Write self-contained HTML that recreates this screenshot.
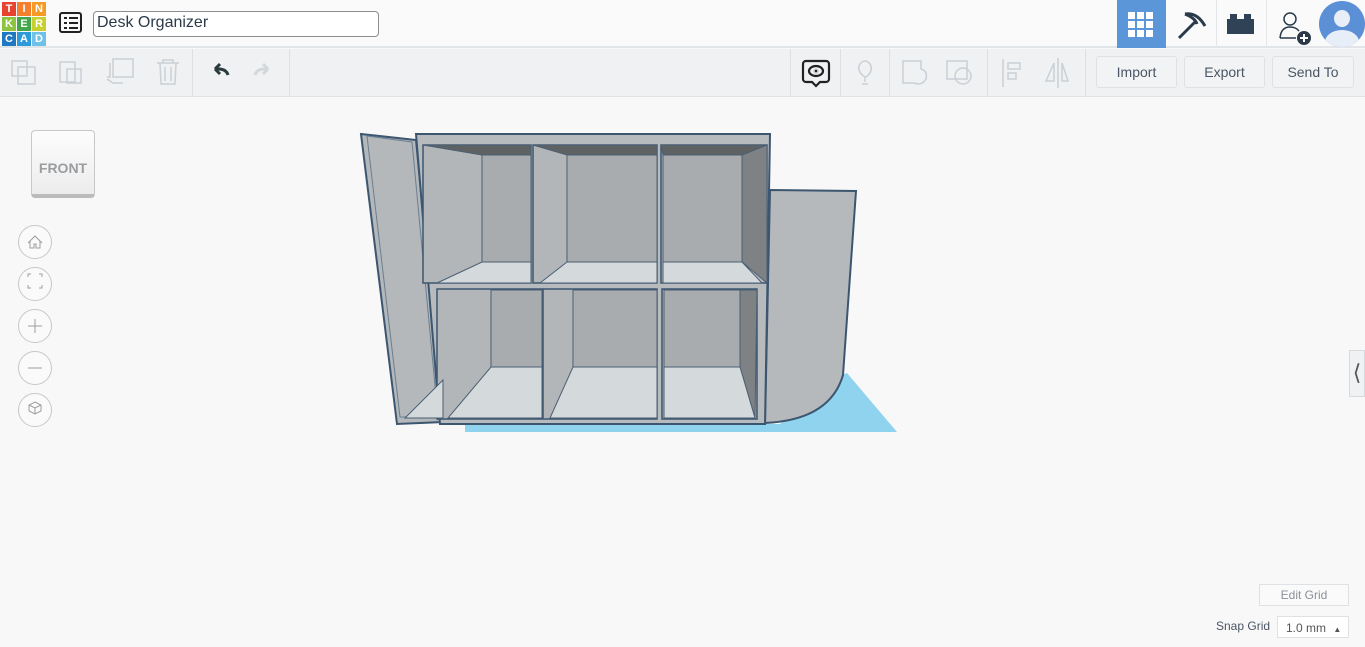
<!DOCTYPE html>
<html><head><meta charset="utf-8"><style>
*{margin:0;padding:0;box-sizing:border-box}
body{width:1365px;height:647px;overflow:hidden;background:#f8f8f8;font-family:"Liberation Sans",sans-serif;position:relative}
.hdr{position:absolute;left:0;top:0;width:1365px;height:48px;background:#fafafa;border-bottom:2px solid #e2e5e8}
.tb{position:absolute;left:0;top:49px;width:1365px;height:48px;background:#f0f1f2;border-bottom:1px solid #e0e3e6}
.logo{position:absolute;left:2px;top:2px;display:grid;grid-template-columns:repeat(3,14px);gap:1px}
.logo div{width:14px;height:14px;color:#fff;font-size:11px;font-weight:bold;text-align:center;line-height:14px}
.title{position:absolute;left:93px;top:11px;width:286px;height:26px;border:1px solid #8a8e93;border-radius:4px;background:#fff;font-size:16px;color:#2b3a4a;padding:2px 3px}
.btn{position:absolute;top:56px;height:32px;border:1px solid #dfe2e5;border-radius:3px;background:#f2f3f4;font-size:14px;color:#4a5665;text-align:center;line-height:30px}
.sep{position:absolute;top:49px;width:1px;height:47px;background:#dde0e3}
.circ{position:absolute;left:18px;width:34px;height:34px;border:1px solid #c5c8cb;border-radius:50%;background:#fafafa}
</style></head><body>
<div class="hdr"></div>
<div class="logo">
<div style="background:#e8432e">T</div><div style="background:#f57f2c">I</div><div style="background:#f59a24">N</div>
<div style="background:#8cc43f">K</div><div style="background:#43a647">E</div><div style="background:#c8d02f">R</div>
<div style="background:#1e78c2">C</div><div style="background:#2d9ad9">A</div><div style="background:#6ec1e8">D</div>
</div>
<svg style="position:absolute;left:59px;top:12px" width="24" height="22"><rect x="1" y="1" width="21" height="19" rx="2" fill="none" stroke="#222" stroke-width="2"/><g fill="#222"><rect x="5" y="5" width="3" height="2"/><rect x="10" y="5" width="9" height="2"/><rect x="5" y="10" width="3" height="2"/><rect x="10" y="10" width="9" height="2"/><rect x="5" y="15" width="3" height="2"/><rect x="10" y="15" width="9" height="2"/></g></svg>
<div class="title">Desk Organizer</div>
<div style="position:absolute;left:1117px;top:0;width:49px;height:48px;background:#5b96d8"></div>
<svg style="position:absolute;left:1128px;top:12px" width="26" height="26"><g fill="#fff"><rect x="0" y="0" width="7" height="7"/><rect x="9" y="0" width="7" height="7"/><rect x="18" y="0" width="7" height="7"/><rect x="0" y="9" width="7" height="7"/><rect x="9" y="9" width="7" height="7"/><rect x="18" y="9" width="7" height="7"/><rect x="0" y="18" width="7" height="7"/><rect x="9" y="18" width="7" height="7"/><rect x="18" y="18" width="7" height="7"/></g></svg>
<svg style="position:absolute;left:1175px;top:10px" width="34" height="30"><path d="M4 28 L20 12 M10 4 Q22 2 30 16 M10 4 Q20 8 22 14" stroke="#2b3a4a" stroke-width="3" fill="none"/></svg>
<div style="position:absolute;left:1227px;top:19px;width:27px;height:15px;background:#2f4256"></div>
<div style="position:absolute;left:1230px;top:14px;width:7px;height:6px;background:#2f4256"></div>
<div style="position:absolute;left:1244px;top:14px;width:7px;height:6px;background:#2f4256"></div>
<div style="position:absolute;left:1216px;top:0;width:1px;height:48px;background:#e4e6e8"></div>
<div style="position:absolute;left:1266px;top:0;width:1px;height:48px;background:#e4e6e8"></div>
<svg style="position:absolute;left:1278px;top:10px" width="36" height="36"><circle cx="12" cy="9" r="6" fill="none" stroke="#2b3a4a" stroke-width="1.5"/><path d="M2 28 Q3 17 12 17 Q18 17 21 21 M2 28 L18 28" stroke="#2b3a4a" stroke-width="1.5" fill="none"/><circle cx="26" cy="28" r="7" fill="#2b3a4a"/><path d="M22 28h8M26 24v8" stroke="#fff" stroke-width="2"/></svg>
<div style="position:absolute;left:1319px;top:1px;width:46px;height:46px;border-radius:50%;background:#5b8fd6;overflow:hidden"><div style="position:absolute;left:15px;top:9px;width:16px;height:17px;border-radius:50%;background:#e8eef8"></div><div style="position:absolute;left:6px;top:29px;width:34px;height:24px;border-radius:50%;background:#e8eef8"></div></div>
<div class="tb"></div>
<svg style="position:absolute;left:0;top:49px" width="300" height="48" fill="none" stroke="#c9d0d6" stroke-width="1.5">
<rect x="12" y="12" width="15" height="15"/><rect x="18" y="18" width="17" height="17"/>
<rect x="60" y="13" width="15" height="20"/><rect x="67" y="20" width="14" height="14"/>
<rect x="113" y="10" width="20" height="18"/><path d="M110 14v14h-3M107 30 l6 4 h10"/>
<path d="M157 14h22M163 14v-3h10v3M160 14l1 21h14l1-21M165 18v14M171 18v14"/>
<path d="M228 26 Q226 19 215 20 M215 20 l5-5 M215 20 l5 5" stroke="#2b3a3e" stroke-width="3"/>
<path d="M255 26 Q257 19 268 20 M268 20 l-5-5 M268 20 l-5 5" stroke="#d2d7dc" stroke-width="3"/>
</svg>
<div class="sep" style="left:192px"></div><div class="sep" style="left:289px"></div>
<div class="sep" style="left:790px"></div><div class="sep" style="left:840px"></div><div class="sep" style="left:889px"></div><div class="sep" style="left:987px"></div><div class="sep" style="left:1085px"></div>
<svg style="position:absolute;left:790px;top:49px" width="300" height="48" fill="none" stroke="#c9d0d6" stroke-width="1.5">
<path d="M16 12h20a3 3 0 0 1 3 3v15a3 3 0 0 1-3 3h-6l-4 4-4-4h-6a3 3 0 0 1-3-3v-15a3 3 0 0 1 3-3z" stroke="#222" stroke-width="2.2"/>
<ellipse cx="26" cy="22" rx="7" ry="5" stroke="#222" stroke-width="2.2"/><circle cx="26" cy="22" r="2" fill="#222"/>
<path d="M75 33v-5 Q66 22 70 15 Q75 9 80 15 Q84 22 76 28 M72 35h6"/>
<path d="M113 12h18v8 Q138 22 136 30 Q132 37 124 34h-11z"/>
<rect x="157" y="12" width="20" height="18"/><circle cx="173" cy="27" r="8"/>
<path d="M213 10v28M218 14h12v6h-12zM218 24h8v6h-8z"/>
<path d="M268 9v30M264 14l-8 18h8zM272 14l6 18h-6z"/>
</svg>
<div class="btn" style="left:1096px;width:81px">Import</div>
<div class="btn" style="left:1184px;width:81px">Export</div>
<div class="btn" style="left:1272px;width:82px">Send To</div>

<div style="position:absolute;left:31px;top:130px;width:64px;height:68px;background:linear-gradient(#fdfdfd,#ececec);border:1px solid #c8c8c8;border-radius:4px;border-bottom:4px solid #bbb;font-size:14px;font-weight:bold;color:#9a9da0;text-align:center;line-height:74px">FRONT</div>
<div class="circ" style="top:225px"></div><div class="circ" style="top:267px"></div><div class="circ" style="top:309px"></div><div class="circ" style="top:351px"></div><div class="circ" style="top:393px"></div>
<svg style="position:absolute;left:18px;top:225px" width="34" height="204" fill="none" stroke="#9a9da0" stroke-width="1">
<path d="M10 18l7-7 7 7M12 16v7h4v-4h2v4h4v-7"/>
<path d="M10 52v-3h3M21 49h3v3M24 60v3h-3M13 63h-3v-3"/>
<path d="M10 101h14M17 94v14"/>
<path d="M10 143h14"/>
<path d="M17 177l6 3v6l-6 3-6-3v-6zM11 180l6 3 6-3M17 183v6"/>
</svg>
<div style="position:absolute;left:1349px;top:350px;width:16px;height:47px;background:#f0f1f2;border:1px solid #d8dbde;font-size:22px;color:#555;line-height:44px;text-align:center">&#10216;</div>
<div style="position:absolute;left:1259px;top:584px;width:90px;height:22px;border:1px solid #dfe2e5;background:#fafafa;font-size:12px;color:#8a9098;text-align:center;line-height:20px">Edit Grid</div>
<div style="position:absolute;left:1216px;top:619px;font-size:12px;color:#4a5665">Snap Grid</div>
<div style="position:absolute;left:1277px;top:616px;width:72px;height:22px;border:1px solid #dfe2e5;background:#fff;font-size:12px;color:#555;line-height:22px;padding-left:8px">1.0 mm <span style="font-size:8px;margin-left:4px">&#9650;</span></div>

<svg style="position:absolute;left:0;top:0" width="1365" height="647">
<polygon points="465,432 897,432 847,373 830,380 780,424 465,424" fill="#8fd3ee"/>
<polygon points="361,134 416,140 443,422 397,424" fill="#b4b8bb" stroke="#3c5670" stroke-width="2"/>
<polygon points="367,136 412,142 438,417 400,417" fill="none" stroke="#6a7e90" stroke-width="1"/>
<path d="M770,190 L856,191 L843,375 Q830,420 765,423 Z" fill="#b6b9bc" stroke="#3c5670" stroke-width="2"/>
<polygon points="416,134 770,134 765,424 440,424" fill="#b7bbbe" stroke="#3c5670" stroke-width="2"/>
<g stroke="#3c5670" stroke-width="1.5">
<rect x="423" y="145" width="108" height="138" fill="#b2b6b9"/>
<rect x="533" y="145" width="124" height="138" fill="#b2b6b9"/>
<rect x="661" y="145" width="106" height="138" fill="#b2b6b9"/>
<rect x="437" y="289" width="105" height="130" fill="#b2b6b9"/>
<rect x="543" y="289" width="114" height="130" fill="#b2b6b9"/>
<rect x="662" y="289" width="95" height="130" fill="#b2b6b9"/>
</g>
<g stroke="#4a5f73" stroke-width="1">
<polygon points="423,145 531,145 531,155 482,155" fill="#5f6263"/>
<rect x="482" y="155" width="49" height="107" fill="#a9acae"/>
<polygon points="482,262 531,262 531,283 437,283" fill="#d4d9dc"/>
<polygon points="533,145 657,145 657,155 567,155" fill="#5f6263"/>
<rect x="567" y="155" width="90" height="107" fill="#a9acae"/>
<polygon points="567,262 657,262 657,283 540,283" fill="#d4d9dc"/>
<polygon points="661,145 767,145 742,155 663,155" fill="#5f6263"/>
<rect x="663" y="155" width="79" height="107" fill="#a9acae"/>
<polygon points="742,155 767,145 767,283 742,262" fill="#7f8284"/>
<polygon points="663,262 742,262 762,283 663,283" fill="#d4d9dc"/>
<rect x="491" y="290" width="51" height="77" fill="#a9acae"/>
<polygon points="491,367 542,367 542,418 448,418" fill="#d4d9dc"/>
<rect x="573" y="290" width="84" height="77" fill="#a9acae"/>
<polygon points="573,367 657,367 657,418 550,418" fill="#d4d9dc"/>
<rect x="664" y="290" width="76" height="77" fill="#a9acae"/>
<polygon points="740,290 757,290 755,418 740,367" fill="#7f8284"/>
<polygon points="664,367 740,367 755,418 664,418" fill="#d4d9dc"/>
<polygon points="443,380 443,418 405,418" fill="#d4d9dc"/>
</g>
</svg>
</body></html>
